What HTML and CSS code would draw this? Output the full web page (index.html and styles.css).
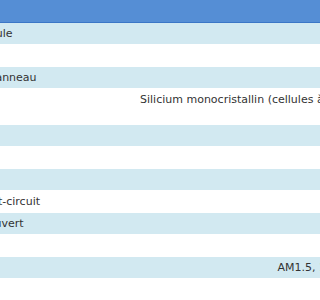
FILE: index.html
```html
<!DOCTYPE html>
<html lang="fr">
<head>
<meta charset="utf-8">
<title>Caractéristiques du panneau</title>
<link rel="stylesheet" href="styles.css">
</head>
<body>
<div class="viewport">
  <table class="specs">
    <thead>
      <tr><th class="label"></th><th class="value"></th></tr>
    </thead>
    <tbody>
      <tr class="alt"><td class="label">Marque du module</td><td class="value">Solaris</td></tr>
      <tr><td class="label">Modèle</td><td class="value">SX-300</td></tr>
      <tr class="alt"><td class="label">Dimension du panneau</td><td class="value">1640 x 992 mm</td></tr>
      <tr><td class="label">Cellules</td><td class="value">Silicium monocristallin (cellules à haute efficacité, technologie PERC, 60 demi-cellules en série)</td></tr>
      <tr class="alt"><td class="label">Puissance</td><td class="value">300 Wc</td></tr>
      <tr><td class="label">Tension</td><td class="value">32,6 V</td></tr>
      <tr class="alt"><td class="label">Courant</td><td class="value">9,2 A</td></tr>
      <tr><td class="label">Courant de court-circuit</td><td class="value">9,8 A</td></tr>
      <tr class="alt"><td class="label">Uoc en circuit ouvert</td><td class="value">39,8 V</td></tr>
      <tr><td class="label">Rendement</td><td class="value">18,4 %</td></tr>
      <tr class="alt"><td class="label">Conditions</td><td class="value">AM1.5, 1000 W/m², température 25 °C</td></tr>
      <tr><td class="label">Poids</td><td class="value">18 kg</td></tr>
      <tr class="alt"><td class="label">Garantie</td><td class="value">25 ans</td></tr>
    </tbody>
  </table>
</div>
</body>
</html>
```

FILE: styles.css
```css
html, body {
  margin: 0;
  padding: 0;
  background: #ffffff;
}

.viewport {
  width: 320px;
  height: 300px;
  overflow: hidden;
}

.specs {
  margin-left: -96px;
  border-collapse: collapse;
  table-layout: fixed;
  width: 734px;
  font-family: "DejaVu Sans", Verdana, sans-serif;
  font-size: 11px;
  line-height: 14px;
  color: #333333;
}

.specs th {
  height: 22px;
  padding: 0 10px;
  background: #558ed5;
  border-bottom: 1px solid #3b76c6;
  box-sizing: border-box;
}

.specs th.label,
.specs td.label {
  width: 226px;
  box-sizing: border-box;
  padding-left: 5px;
}

.specs td {
  border-top: 1px solid #ffffff;
  padding: 4px 10px 3px;
  vertical-align: middle;
}

.specs td.label {
  text-align: left;
  white-space: nowrap;
}

.specs td.value {
  text-align: left;
  text-align-last: center;
}

.specs tr.alt td {
  background: #d2e9f1;
}
```
